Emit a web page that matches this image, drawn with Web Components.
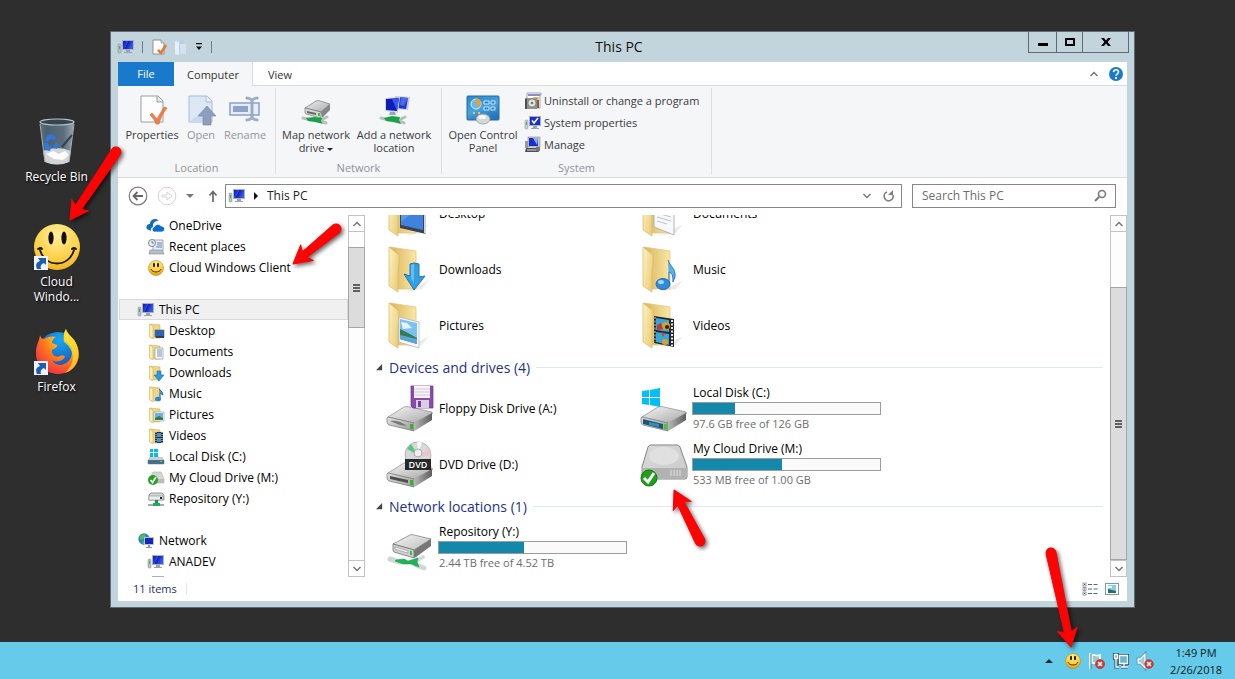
<!DOCTYPE html>
<html lang="en">
<head>
<meta charset="utf-8">
<title>This PC</title>
<style>
  html, body { height: 100%; margin: 0; }
  body { background: #2e2e2e; overflow: hidden; font-family: "Open Sans", "Noto Sans", sans-serif; font-size: 12px; line-height: 16px; color: #111; }
</style>
</head>
<body>
<desk-top></desk-top>
<script>
const ICONS = {
  pc: [16, `<linearGradient id="s" x2="1" y2=".4"><stop offset="0" stop-color="#0c16a8"/><stop offset=".45" stop-color="#2a48e0"/><stop offset=".5" stop-color="#1120b4"/><stop offset="1" stop-color="#3c5ae8"/></linearGradient>
    <rect x="4" y="1" width="12" height="10" fill="#a9b2c4"/><rect x="5" y="2" width="10" height="8" fill="url(#s)"/>
    <path d="M8 11h4v2h2v1H6v-1h2z" fill="#9aa3b0"/><rect x="0" y="5" width="3" height="9" rx="1" fill="#b9bfc6" stroke="#878f98" stroke-width=".5"/><rect x="1" y="7" width="1" height="3" fill="#35c32c"/>`],
  doccheck: [16, `<path d="M2 1h8l3 3v11H2z" fill="#fff" stroke="#8b8f94"/><path d="M10 1v3h3" fill="#ddd" stroke="#8b8f94" stroke-width=".7"/><path d="M7 11l3 3 5-8" fill="none" stroke="#e8743b" stroke-width="2.6"/>`],
  newfolder: [16, `<path d="M3 2l8-1v13H3z" fill="#b9cfe6"/><path d="M2 2l4 1v13l-4-1z" fill="#e6effa"/><path d="M7 5h6v10H7z" fill="#d3e1f1"/>`],
  props: [32, `<path d="M5 3h17l5 5v21H5z" fill="#fdfdfe" stroke="#9a9da3"/><path d="M21 3v6h6" fill="#e6e7ea" stroke="#9a9da3"/><path d="M14 22l2-2 5 6 7-12 3 1c-4 5-6 9-8 16h-3c-1-3-3-6-6-9z" fill="#ef8048" stroke="#d7632c" stroke-width=".6"/>`],
  open: [32, `<path d="M4 3h18l5 5v21H4z" fill="#dde7f6" stroke="#a4bce0"/><path d="M21 3v6h6" fill="#eef3fb" stroke="#a4bce0"/><path d="M4 29h14V18z" fill="#cbd9ef"/><path d="M22 13l9 10h-5v9h-8v-9h-5z" fill="#8d9dbd" stroke="#76879f" stroke-width=".6"/>`],
  rename: [32, `<rect x="1" y="10" width="29" height="12" fill="#e6edf8" stroke="#8fa6cb" stroke-width="1.6"/><rect x="4" y="13" width="15" height="6" fill="#8fa3c8"/><path d="M17 4c3 0 5 1 6 2 1-1 3-2 6-2v2c-3 0-5 1-5 3v14c0 2 2 3 5 3v2c-3 0-5-1-6-2-1 1-3 2-6 2v-2c3 0 5-1 5-3V9c0-2-2-3-5-3z" fill="#a3b3cf" stroke="#7f92b4" stroke-width=".6"/>`],
  mapdrive: [32, `<linearGradient id="t" x2="1" y2="1"><stop stop-color="#f2f2f2"/><stop offset="1" stop-color="#a9a9a9"/></linearGradient><path d="M5 15L16 8q2-1 4 0l10 3-9 8z" fill="url(#t)" stroke="#777" stroke-width=".7"/><path d="M5 15l16 4v6L6 21q-1 0-1-2z" fill="#d8d8d8" stroke="#666" stroke-width=".6"/><path d="M21 19l9-8v6l-8 8z" fill="#858585"/><path d="M7 18l9 2v2L7 20z" fill="#666"/><rect x="18" y="20" width="2" height="3" fill="#37c837"/><path d="M3 25l8 2M21 28l5 2M21 27l6-3" stroke="#b5c1bc" stroke-width="3" stroke-linecap="round"/><path d="M6 25l8-1 8 1-1 3 2 3-8-2-7-1z" fill="#18a34a"/>`],
  addnet: [32, `<path d="M17 3l15 1-2 13-12-1z" fill="#c5cad6"/><path d="M18 4l12 1-2 11-9-1z" fill="#1d35d0"/><path d="M23 4l7 1-4 8-4-1z" fill="#4c6af0"/><path d="M7 5l15-1-2 16-13-2z" fill="#d2d6de"/><path d="M8 6l13-1-2 13-11-1z" fill="#0c1cb8"/><path d="M14 6l7-1-2 13z" fill="#3958e8"/><path d="M12 19h5l1 3h-7z" fill="#9aa"/><path d="M3 25l8 2M21 28l5 2M21 27l6-3" stroke="#b5c1bc" stroke-width="3" stroke-linecap="round"/><path d="M6 25l8-2 8 1-1 3 2 4-8-2-7-1z" fill="#18a34a"/>`],
  panel: [32, `<linearGradient id="g" y2="1" x2=".5"><stop stop-color="#2b86c8"/><stop offset=".6" stop-color="#4aa2dc"/><stop offset="1" stop-color="#2777bb"/></linearGradient><rect x="0" y="3" width="32" height="24" rx="1" fill="url(#g)" stroke="#1e6aa8"/><circle cx="9" cy="11" r="5" fill="#6bb9ea" stroke="#d8efff"/><path d="M9 11V5a6 6 0 0 1 4 9z" fill="#f49b21"/><path d="M17 8h5v3h-5zM24 8h4v3h-4zM17 14h5v3h-5zM24 14h4v3h-4z" fill="#2a7ec4" stroke="#d8efff" stroke-width=".9"/><path d="M6 19h2v2H6z" fill="#f8c040"/><path d="M11 19h2v2h-2z" fill="#f8c040"/><ellipse cx="16" cy="26" rx="7" ry="5" fill="#d5d8da" stroke="#8b9196" stroke-width=".7"/><ellipse cx="15" cy="24" rx="4" ry="2" fill="#f5f6f7"/>`],
  uninstall: [16, `<path d="M2 0h14v2h-1v13H1V5h1z" fill="#fff" stroke="#7d81a4" stroke-width=".7"/><rect x="3" y="1" width="12" height="2" fill="#8d8fc0"/><path d="M8 4h6l-1 6z" fill="#edb84a"/><rect x="0" y="5" width="12" height="11" fill="#8f9490"/><circle cx="7" cy="10" r="4" fill="#dfe5df" stroke="#666" stroke-width=".6"/><circle cx="7" cy="10" r="1.300" fill="#777"/><path d="M1 6v10" stroke="#111"/><path d="M12 7h2v8h-2z" fill="#8a5a3a"/>`],
  sysprops: [16, `<rect x="4" y="1" width="12" height="10" fill="#a9aebb"/><rect x="5" y="2" width="10" height="8" fill="#1b2ed0"/><path d="M7 5.500l2 2.500 4-5" fill="none" stroke="#fff" stroke-width="1.600"/><path d="M8 11h4v2h2v1H6v-1h2z" fill="#9aa3b0"/><rect x="0" y="5" width="3" height="9" rx="1" fill="#c9cdd2" stroke="#878f98" stroke-width=".5"/><rect x="1" y="7" width="1" height="3" fill="#35c32c"/>`],
  manage: [16, `<rect x="3" y="0" width="12" height="10" fill="#c5c9cf" stroke="#777" stroke-width=".5"/><rect x="4" y="1" width="9" height="8" fill="#1b2ed0"/><path d="M8 1h5l-1 7z" fill="#8fb2f4"/><rect x="0" y="4" width="3" height="7" fill="#999"/><path d="M1 11h11l2 4H0z" fill="#4b4f55"/><path d="M2 13h10" stroke="#ddd"/><rect x="11" y="10" width="4" height="4" fill="#777"/>`],
  onedrive: [16, `<path d="M1 12a3 3 0 0 1 1-6 5 5 0 0 1 9-3 5 5 0 0 0-6 6 3 3 0 0 0-2 4z" fill="#0f6cbd"/><path d="M6 14a2.600 2.600 0 0 1 0-5 4 4 0 0 1 7-1 3 3 0 0 1 1 6z" fill="#0a6fcc" stroke="#fff" stroke-width=".7"/>`],
  recent: [16, `<path d="M5 1h10v11H5z" fill="#e9edf2" stroke="#8d98a5" stroke-width=".8"/><path d="M9 4h5M9 6h5M8 8h6" stroke="#5c88b8"/><path d="M2 11h12l2 4H1z" fill="#b8bfc7" stroke="#818a94" stroke-width=".6"/><circle cx="4" cy="4" r="3.500" fill="#eef1f4" stroke="#7a8694"/><path d="M4 2v2h2" stroke="#555" fill="none" stroke-width=".8"/>`],
  smile: [48, `<radialGradient id="g" cy=".25" r=".85"><stop stop-color="#ffef9c"/><stop offset=".6" stop-color="#fdd045"/><stop offset="1" stop-color="#eda81a"/></radialGradient><circle cx="24" cy="24" r="23" fill="url(#g)"/><ellipse cx="18" cy="15" rx="2.600" ry="6.500" fill="#141005"/><ellipse cx="31" cy="15" rx="2.600" ry="6.500" fill="#141005"/><path d="M5 26q3-2 4 0M39 26q2-2 4 0M7 27c5 18 29 18 34 0" fill="none" stroke="#1a1306" stroke-width="1.800" stroke-linecap="round"/>`],
  minismile: [16, `<radialGradient id="g" cy=".2" r=".9"><stop stop-color="#fff090"/><stop offset=".6" stop-color="#fbc92f"/><stop offset="1" stop-color="#d18d10"/></radialGradient><circle cx="8" cy="8" r="7.500" fill="url(#g)" stroke="#b58a26" stroke-width=".6"/><ellipse cx="6" cy="5" rx="1" ry="2.200" fill="#1b1302"/><ellipse cx="10" cy="5" rx="1" ry="2.200" fill="#1b1302"/><path d="M3 9c1 4 9 4 10 0" fill="none" stroke="#4a3508" stroke-width="1"/>`],
  folder: [16, `<path d="M2 1l10 1v13H3z" fill="#f0d684" stroke="#c9a54a" stroke-width=".5"/><path d="M1.500 1L5 3v12.500L1.500 14z" fill="#fbeeb5" stroke="#d0ae58" stroke-width=".6"/>`],
  disk: [16, `<path d="M2 8h12l2 3v4H0v-4z" fill="#9aa1a7"/><path d="M0 11h16v4H0z" fill="#3f6f8a" stroke="#777" stroke-width=".5"/><path d="M2 8h12l2 3H0z" fill="#c8cdd0"/><rect x="12" y="12" width="2" height="1" fill="#5fe04f"/><path d="M2 0h3v3H2zM6 0h4v3H6zM2 4h3v4H2zM6 4h4v4H6z" fill="#00bcf2"/>`],
  cloudsm: [16, `<path d="M5 2h8l3 7v4H2V9z" fill="#d6d6d6" stroke="#aaa" stroke-width=".6"/><path d="M2 9h14v4H2z" fill="#bcbcbc"/><circle cx="5" cy="10" r="5" fill="#23a31f"/><path d="M2.500 10l2 2.500L8 7" fill="none" stroke="#fff" stroke-width="1.700"/>`],
  netdrive: [16, `<path d="M3 2h11l2 2v5H1V4z" fill="#d5d8da" stroke="#777" stroke-width=".7"/><path d="M1 5h14v4H1z" fill="#eee" stroke="#777" stroke-width=".5"/><rect x="12" y="6" width="2" height="2" fill="#222"/><path d="M7 9h3v3H7z" fill="#0c9a55"/><path d="M5 12h7v3H5z" fill="#16ae67"/><path d="M0 14h5M12 14h4" stroke="#aaa" stroke-width="2"/>`],
  network: [16, `<circle cx="6" cy="6" r="5.700" fill="#2a7fd0"/><path d="M2 3q2-2 5-2l1 3-3 2-3 1zM4 8l3 1v3H5z" fill="#4fc04a"/><rect x="6" y="4" width="10" height="8" fill="#b9c3d4"/><rect x="7" y="5" width="8" height="6" fill="#1428b8"/><path d="M10 12h2v2h2v1H8v-1h2z" fill="#8f98a8"/>`],
  recycle: [48, `<linearGradient id="g" x2="1"><stop stop-color="#64737f"/><stop offset=".2" stop-color="#4b5f70"/><stop offset=".7" stop-color="#5c6e7c"/><stop offset="1" stop-color="#9ba6ae"/></linearGradient><path d="M7 4h34l-5 40q-12 5-24 0z" fill="url(#g)"/><path d="M10 33q14-6 28 0l-2 11q-12 5-24 0z" fill="#d2d5d7"/><path d="M13 36l7-3 6 3 6-3 4 4-6 5-9-1z" fill="#fff"/><ellipse cx="24" cy="4" rx="17" ry="3" fill="#36444f" stroke="#b9c2c8" stroke-width="1.200"/><path d="M14 17l5-1 4 3-2 3-4-1-2 3-3-1zM11 24l4 1 1 3 3-1-2 6-5-1zM20 30l1-3 3-3 2 4-2 3z" fill="#3177d8"/><path d="M7 6l5 38M41 6l-5 38" stroke="#a4afb7"/><path d="M29 29l10-12" stroke="#33424e" stroke-width="2"/>`],
  firefox: [48, `<radialGradient id="f" cx=".75" cy=".1" r="1"><stop stop-color="#fff03d"/><stop offset=".3" stop-color="#ffc21f"/><stop offset=".6" stop-color="#ff7a19"/><stop offset="1" stop-color="#f0294c"/></radialGradient><radialGradient id="b" cx=".55" cy=".2" r=".9"><stop stop-color="#16a8f2"/><stop offset="1" stop-color="#1b3aa6"/></radialGradient><circle cx="25" cy="24" r="20" fill="url(#b)"/><path d="M7 7c1 3 2 4 4 4 5-3 10-3 12-2-3 1-4 4-4 6l5 2c1 2-3 4-5 5-1 5 4 8 8 6 3-1 5 0 5 1-4 6-11 5-13 3 5 9 19 5 20-7 1-6-3-9-7-12-2-4-1-9 1-12 1 4 4 6 8 11 10 14 4 33-15 34C13 46 2 37 3 24c0-7 3-10 4-17z" fill="url(#f)"/><path d="M33 1c1 4 4 6 8 11 9 13 4 29-9 33 10-9 11-22-1-31-1-4 0-10 2-13z" fill="#ffdc30" opacity=".75"/>`],
  shortcut: [16, `<path d="M1 1h14v14H1z" fill="#eff3f8"/><path d="M4 14c-2-5 0-7 3-8L5 3h8v7l-2-2c-3 1-4 3-3 6z" fill="#1b5dae"/>`],
  flag: [16, `<path d="M1 0v16M3 2c3-1 4 2 8 0v8c-4 2-5-1-8 0z" stroke="#fff" stroke-width="1.600" fill="#9cc6d4"/><path d="M2 1v15" stroke="#3e5664" stroke-width=".8"/><circle cx="11" cy="11" r="4.500" fill="#d83a35" stroke="#a61d1a" stroke-width=".6"/><path d="M9 9l4 4M13 9l-4 4" stroke="#fff" stroke-width="1.500"/>`],
  nettray: [16, `<g fill="none" stroke="#33596b" stroke-width="3.200"><path d="M6.500 2.500h8v8h-8z"/><path d="M8 14h7M11 11v3M1.500 1.500h3v4h-3zM3 6v8h3"/></g><g fill="#6fb6d2" stroke="#fff" stroke-width="1.300"><path d="M6.500 2.500h8v8h-8z"/><path d="M8 14h7M11 11v3M1.500 1.500h3v4h-3z"/><path d="M3 6v8h3" fill="none"/></g>`],
  sound: [16, `<path d="M1 6h2l5-5v14l-5-5H1z" fill="#9ccbdc" stroke="#4a6d7d" stroke-width="2.400"/><path d="M1 6h2l5-5v14l-5-5H1z" fill="#9ccbdc" stroke="#fff" stroke-width="1.300"/><circle cx="12" cy="11" r="4.300" fill="#d83a35" stroke="#a61d1a" stroke-width=".6"/><path d="M10 9l4 4M14 9l-4 4" stroke="#fff" stroke-width="1.500"/>`],
  back: [20, `<circle cx="10" cy="10" r="8.800" fill="#fff" stroke="#7b7b7b" stroke-width="1.200"/><path d="M15 10H6M9.500 6L5.500 10l4 4" fill="none" stroke="#666" stroke-width="1.800"/>`],
  forward: [20, `<circle cx="10" cy="10" r="8.800" fill="#fff" stroke="#d4d4d4"/><path d="M5 9h5V6l5 4-5 4v-3H5z" fill="none" stroke="#d4d4d4"/>`],
  up: [16, `<path d="M8 14V4M4.500 7.500l3.500-4 3.500 4" fill="none" stroke="#6a6a6a" stroke-width="1.700"/>`],
  down: [8, `<path d="M0 2h8L4 6z" fill="#777"/>`],
  tri: [8, `<path d="M2 0l4 4-4 4z" fill="#111"/>`],
  refresh: [16, `<path d="M6 4a4.500 4.500 0 1 0 6 3" fill="none" stroke="#808080" stroke-width="1.700"/><path d="M12 2v5H7z" fill="#808080"/>`],
  mag: [16, `<circle cx="10" cy="6" r="3.500" fill="none" stroke="#777" stroke-width="1.600"/><path d="M7 9l-4 4" stroke="#777" stroke-width="2"/>`],
  chevup: [10, `<path d="M1.500 7L5 3.500 8.500 7" fill="none" stroke="#777" stroke-width="1.500"/>`],
  chevdown: [10, `<path d="M1.500 3L5 6.500 8.500 3" fill="none" stroke="#777" stroke-width="1.500"/>`],
  qat: [8, `<path d="M1 0h6v1.200H1zM1 3.500h6L4 7z" fill="#111"/>`],
  traytri: [8, `<path d="M0 6h8L4 2z" fill="#1c2a30"/>`],
  corner: [8, `<path d="M7 0v7H0z" fill="#444"/>`],
  help: [16, `<circle cx="8" cy="8" r="7" fill="#1979ca"/><path d="M5.500 6.200q.3-2.400 2.600-2.400T10.500 6q0 1-1.200 1.800T8 9.800" fill="none" stroke="#fff" stroke-width="1.600"/><rect x="7" y="11" width="2" height="2" fill="#fff"/>`],
  min: [12, `<rect x="1" y="7" width="10" height="3" fill="#000"/>`],
  max: [12, `<rect x="2" y="3" width="8" height="6" fill="none" stroke="#000" stroke-width="2"/>`],
  close: [12, `<path d="M1 2h3l2 2.600L8 2h3L7.600 6 11 10H8L6 7.400 4 10H1l3.400-4z" fill="#000"/>`],
  details: [16, `<g fill="none" stroke="#7d8693" stroke-width=".8"><rect x="1" y="2" width="3" height="3"/><rect x="1" y="6.500" width="3" height="3"/><rect x="1" y="11" width="3" height="3"/></g><path d="M2 3h1v1H2zM2 12h1v1H2z" fill="#35a"/><path d="M2 7.500h1v1H2z" fill="#c33"/><path d="M6 3.500h4M11.500 3.500h4M6 8h4M11.500 8h4M6 12.500h4M11.500 12.500h4" stroke="#5a6474"/>`],
  tiles: [16, `<rect x="1.500" y="2.500" width="13" height="11" fill="#fff" stroke="#6b9bbd"/><rect x="4" y="4" width="8" height="8" fill="#8fc8ee"/><path d="M4 8l4 1 4 1v2H4z" fill="#2d6f58"/><path d="M4 5h4v2H4z" fill="#dff"/>`]
};
/* Small overlays that turn the plain nav folder into each library folder. */
const SMALL = {
  desktop: `<path d="M7 7h9v7H7z" fill="#2a63b8" stroke="#5c6a78" stroke-width=".7"/><path d="M8 13h8v2H8z" fill="#35404d"/>`,
  documents: `<path d="M7 4h8v11H7z" fill="#fff" stroke="#8b97a6" stroke-width=".7"/><path d="M9 6h5M9 8h5M9 10h5M9 12h5" stroke="#5880a8" stroke-width=".9"/>`,
  downloads: `<path d="M9 6h4v4h3l-5 6-5-6h3z" fill="#2f97dd" stroke="#1b6ba8" stroke-width=".6"/>`,
  music: `<path d="M11 3q4 3 4 6l-3-2v6" fill="#4aa0e8" stroke="#1e6fc0"/><ellipse cx="10" cy="13" rx="3" ry="2.200" fill="#2a86d8"/>`,
  pictures: `<path d="M6 5h10v9H6z" fill="#fff" stroke="#9aa4ae" stroke-width=".7"/><path d="M7 6h8v7H7z" fill="#6db4e6"/><path d="M7 11l4-2 4 2v2H7z" fill="#3c7a4e"/>`,
  videos: `<path d="M7 4h8v11H7z" fill="#2b2f36"/><path d="M9 5h4v4H9zM9 10h4v4H9z" fill="#4a8fd0"/><path d="M8 4v11M14 4v11" stroke="#ddd" stroke-dasharray="1 1"/>`
};
const BIGFOLDER = `<linearGradient id="bk" x1="0" x2="1"><stop stop-color="#d9b45a"/><stop offset="1" stop-color="#f9e8a6"/></linearGradient><linearGradient id="fl" x2="1" y2=".6"><stop stop-color="#fdf3c0"/><stop offset="1" stop-color="#eccf7c"/></linearGradient>
  <path d="M28 42l15-8-7 9-18 3z" fill="#000" opacity=".08"/><path d="M4 1l26 4v38H12z" fill="url(#bk)" stroke="#dcc27a" stroke-width=".7"/><path d="M3 1l10 8v12l-1 3v22L3 40z" fill="url(#fl)" stroke="#d5b76a" stroke-width=".7"/>`;
const BIG = {
  desktop: `<path d="M14 8l26 5v31l-26-6z" fill="#39434f"/><path d="M15 10l22 4v26l-22-5z" fill="#3f82e0"/><path d="M15 10l22 4-22 18z" fill="#6ba6f2" opacity=".6"/><path d="M38 13l2 1v30l-2-1z" fill="#cfd5db"/>`,
  documents: `<path d="M14 10h14l6 4v31l-20-8z" fill="#f6f8fb" stroke="#9aa3ad" stroke-width=".8"/><path d="M17 19l14 3M17 23l14 4M17 27l14 4M17 31l10 3" stroke="#b9c2cc"/><path d="M22 16l7 2v4l-7-2z" fill="#2e8397"/>`,
  downloads: `<path d="M24 18q4-2 9 0v13l6-1-11 14-10-16 6 2z" fill="#34a0e2" stroke="#1d78b8"/><path d="M25 19q2-1 3-1v20l-3-6z" fill="#8bd0f5" opacity=".6"/>`,
  music: `<path d="M28 14c2 7 8 8 7 17l-2 5c0-7-1-9-4-10v13" fill="#58b0ef" stroke="#2a7cc6"/><ellipse cx="23" cy="38" rx="7" ry="5.500" fill="#2f8bdc" stroke="#1f6bb5"/><ellipse cx="21" cy="36" rx="3" ry="2" fill="#9fd6fa"/>`,
  pictures: `<path d="M13 15l20 5v26l-20-6z" fill="#f8f9fa" stroke="#b5babf" stroke-width=".8"/><path d="M14 17l17 4v21l-17-5z" fill="#7cc2f0"/><path d="M15 20l6 1 5 5-9 1z" fill="#fff" opacity=".8"/><path d="M14 27l8 4 9 5v6l-17-5z" fill="#357a52"/><path d="M14 33l17 4v5l-17-5z" fill="#5ba7d8"/>`,
  videos: `<path d="M14 14l20 3v28l-20-4z" fill="#23272c"/><path d="M16 16l13 2v12l-13-2zM16 30l13 2v11l-13-3z" fill="#37a6dc"/><circle cx="26" cy="24" r="4" fill="#d9a02a"/><circle cx="27" cy="25" r="2" fill="#222"/><path d="M17 23l4-2 2 6-6 1z" fill="#c8342e"/><path d="M21 30l4 1-2 4z" fill="#d43b2e"/><circle cx="25" cy="40" r="3" fill="#d9a02a"/><path d="M32 18v26" stroke="#e8e8e8" stroke-width="2" stroke-dasharray="2 1.500"/><path d="M15 15v25" stroke="#ccc" stroke-dasharray="2 1.500"/>`
};
const DRIVE = `<linearGradient id="t" x2="1" y2="1"><stop stop-color="#f6f6f6"/><stop offset="1" stop-color="#a6a6a6"/></linearGradient><linearGradient id="d" x2="1"><stop stop-color="#b8b8b8"/><stop offset="1" stop-color="#5e5e5e"/></linearGradient><linearGradient id="e" y2="1"><stop stop-color="#e2e2e2"/><stop offset="1" stop-color="#9a9a9a"/></linearGradient>
  <path d="M2 32L18 22q3-1 6 0l22 5q1 1 0 2L28 38z" fill="url(#t)" stroke="#8d8d8d" stroke-width=".7"/><path d="M2 32l26 6v8L3 40q-2-1-2-3v-4z" fill="url(#e)" stroke="#777" stroke-width=".7"/><path d="M28 38l18-10v7L30 45l-2 1z" fill="url(#d)"/>`;
const SLOT = `<path d="M4 35l18 4v3L4 38z" fill="#4c4f52"/><rect x="24" y="39" width="3" height="5" fill="#2fb32b"/>`;
const DRIVES = {
  floppy: DRIVE + `<path d="M4 36q9-1 17 5l-7-1z" fill="#777"/><rect x="24" y="39" width="3" height="5" fill="#2fb32b"/><path d="M25 1h22v22H27l-2-2z" fill="#8a4cab" stroke="#6c3590" stroke-width=".7"/><path d="M28 1h16v12H28z" fill="#f7f5fa"/><path d="M28 4h16M28 7h16M28 10h16" stroke="#ccc4d6"/><path d="M30 15h13v8H30z" fill="#d9cfe3"/><path d="M32 16h3v6h-3z" fill="#7a3d9c"/>`,
  dvd: DRIVE + SLOT + `<circle cx="32" cy="14" r="13" fill="#d6d8da" stroke="#a2a6a9" stroke-width=".8"/><path d="M32 14L21 8l4-5z" fill="#58c878"/><path d="M32 14l-1-13h5z" fill="#f7f7f7"/><path d="M32 14l12-6 1 7z" fill="#efc2c8"/><circle cx="32" cy="12" r="4" fill="#eceeef" stroke="#aaa"/><path d="M19 18h26v11H19z" fill="#26282a"/><text x="32" y="27" text-anchor="middle" font-family="Open Sans" font-size="9" font-weight="600" fill="#fff">DVD</text>`,
  local: DRIVE + `<path d="M3 34l20 5v5L3 39z" fill="#1d5674"/><path d="M9 37l10 2v3l-10-2z" fill="#2f90b8"/><rect x="24" y="39" width="3" height="5" fill="#39d026"/><path d="M2 6l7-1v7H2zM10 5l10-2v9H10zM2 13h7v7l-7-1zM10 13h10v9l-10-2z" fill="#00c0f7"/>`,
  cloud: `<linearGradient id="t" y2="1"><stop stop-color="#dadada"/><stop offset="1" stop-color="#cacaca"/></linearGradient><path d="M11 4h26q2 0 3 2l7 20v10q0 2-2 2H4q-2 0-2-2V26L8 6q1-2 3-2z" fill="url(#t)" stroke="#858585"/><path d="M2 27h45v9q0 2-2 2H4q-2 0-2-2z" fill="#b2b2b2"/><ellipse cx="24" cy="15" rx="15" ry="9" fill="#e0e0e0"/><path d="M31 29v6M34 29v6M37 29v6M40 29v6" stroke="#e2e2e2"/><circle cx="9" cy="37" r="8" fill="#1fa01b" stroke="#137a12"/><path d="M4 37l4 4 6-9" fill="none" stroke="#fff" stroke-width="3"/>`,
  net: `<linearGradient id="t" x2="1" y2="1"><stop stop-color="#f6f6f6"/><stop offset="1" stop-color="#bcbcbc"/></linearGradient><path d="M7 20l17-9q2-1 4 0l17 4-17 11z" fill="url(#t)" stroke="#777" stroke-width=".7"/><path d="M7 20l21 6v8L8 28q-1-1-1-3z" fill="#d0d0d0" stroke="#666" stroke-width=".7"/><path d="M28 26l17-11v7L30 33l-2 1z" fill="#777"/><path d="M9 23l13 4v2L9 25z" fill="#fff" stroke="#777" stroke-width=".5"/><rect x="24" y="27" width="2" height="4" fill="#36c22e"/><path d="M4 35l10 3M30 41l8 3" stroke="#cfd8d6" stroke-width="5" stroke-linecap="round"/><path d="M30 37l7-4" stroke="#d5dddb" stroke-width="4" stroke-linecap="round"/><path d="M10 36l8-1 4 2 10-3-1 4 2 5-8-3-8 0-8-3z" fill="#1db457" stroke="#14913f" stroke-width=".5"/>`
};
for (const k in SMALL) ICONS['s-' + k] = [16, ICONS.folder[1] + SMALL[k]];
for (const k in BIG) ICONS['b-' + k] = [48, BIGFOLDER + BIG[k]];
for (const k in DRIVES) ICONS['d-' + k] = [48, DRIVES[k]];

const icon = (name, size) => `<win-icon name="${name}" style="--size:${size || ICONS[name][0]}px"></win-icon>`;

/* Base class: renders a template string into an open shadow root. */
class Part extends HTMLElement {
  connectedCallback() {
    if (this.shadowRoot) return;
    const t = document.createElement('template');
    t.innerHTML = this.view();
    this.attachShadow({ mode: 'open' }).append(t.content.cloneNode(true));
  }
  at(name) { return this.getAttribute(name) || ''; }
}
const define = (tag, view) => customElements.define(tag, class extends Part { view() { return view(this); } });
const RESET = `button, a { font: inherit; color: inherit; background: none; border: 0; padding: 0; margin: 0; text-decoration: none; cursor: default; }`;

define('win-icon', el => {
  const [box, body] = ICONS[el.at('name')];
  return `<style>:host { display: block; flex: none; width: var(--size); height: var(--size); } svg { display: block; width: 100%; height: 100%; overflow: visible; }</style>
  <svg viewBox="0 0 ${box} ${box}" aria-hidden="true">${body}</svg>`;
});

define('desktop-shortcut', el => `<style>${RESET}
  :host { display: block; height: 105px; }
  a { display: flex; flex-direction: column; align-items: center; gap: 3px; color: #fff; text-align: center; line-height: 15px; text-shadow: 1px 1px 2px #000; }
  .pic { position: relative; }
  .badge { position: absolute; left: 0; bottom: 0; }
  span { width: 64px; }
  </style><a href="#"><div class="pic">${icon(el.at('icon'), 48)}${el.hasAttribute('linked') ? `<div class="badge">${icon('shortcut', 16)}</div>` : ''}</div><span><slot></slot></span></a>`);

define('title-bar', () => `<style>${RESET}
  :host { display: grid; grid-template-columns: 1fr auto 1fr; height: 30px; }
  .quick { display: flex; align-items: center; gap: 6px; }
  .quick i { width: 1px; height: 12px; margin: 0 2px; background: #6f7f88; }
  h1 { margin: 0; padding-right: 7px; font-size: 14px; font-weight: 400; line-height: 30px; }
  .caption { display: flex; justify-self: end; align-self: start; border: solid #5d6a72; border-width: 0 1px 1px; height: 20px; margin-right: -2px; }
  .caption button { display: flex; align-items: center; justify-content: center; width: 27px; }
  .caption button:nth-child(n+2) { border-left: 1px solid #5d6a72; }
  .caption button:nth-child(2) { width: 26px; }
  .caption button:last-child { width: 46px; }
  </style>
  <div class="quick">${icon('pc')}<i></i>${icon('doccheck')}${icon('newfolder', 16)}<button aria-label="Customize">${icon('qat', 8)}</button><i></i></div>
  <h1>This PC</h1>
  <div class="caption"><button aria-label="Minimize">${icon('min')}</button><button aria-label="Maximize">${icon('max')}</button><button aria-label="Close">${icon('close')}</button></div>`);

define('ribbon-tabs', () => `<style>${RESET}
  :host { display: flex; height: 23px; background: #fff; border-bottom: 1px solid #dadbdc; padding-right: 3px; align-items: stretch; color: #333; font-size: 11px; }
  a { display: block; line-height: 25px; text-align: center; }
  .file { width: 56px; background: #1979ca; color: #fff; line-height: 24px; height: 24px; }
  .on { width: 78px; height: 24px; background: #f5f6f7; border-right: 1px solid #dadbdc; }
  .view { width: 54px; }
  .end { margin-left: auto; display: flex; align-items: center; gap: 9px; }
  </style>
  <a class="file" href="#">File</a><a class="on" href="#">Computer</a><a class="view" href="#">View</a>
  <div class="end"><button aria-label="Collapse ribbon">${icon('chevup')}</button><button aria-label="Help">${icon('help')}</button></div>`);

define('ribbon-group', el => `<style>
  :host { display: flex; flex-direction: column; box-sizing: border-box; margin: 2px 0 3px; border-right: 1px solid #dfe0e2; }
  .items { flex: 1; display: flex; padding-top: 5px; }
  .label { text-align: center; color: #909399; font-size: 11px; line-height: 12px; }
  </style><div class="items"><slot></slot></div><div class="label">${el.at('label')}</div>`);

define('ribbon-button', el => `<style>${RESET}
  :host { display: block; color: #3b3b3b; font-size: 11px; }
  :host([disabled]) { color: #929599; }
  button { display: flex; flex-direction: column; align-items: center; gap: 3px; width: 100%; line-height: 13px; white-space: nowrap; }
  </style><button${el.hasAttribute('disabled') ? ' disabled' : ''}>${icon(el.at('icon'), 32)}<span><slot></slot></span></button>`);

define('ribbon-link', el => `<style>${RESET}
  :host { display: block; color: #3b3b3b; font-size: 11px; }
  button { display: flex; align-items: center; gap: 3px; height: 22px; white-space: nowrap; }
  </style><button>${icon(el.at('icon'), 16)}<slot></slot></button>`);

define('ribbon-bar', () => `<style>
  :host { display: flex; height: 91px; background: #f5f6f7; border-bottom: 1px solid #dadbdc; }
  .c { display: flex; flex-direction: column; padding-left: 4px; margin-top: -3px; }
  .sm { display: inline-block; vertical-align: middle; margin-left: 3px; width: 0; height: 0; border: 3px solid transparent; border-top-color: #222; border-bottom: 0; }
  .w44 { width: 44px; } .w54 { width: 54px; } .w80 { width: 80px; } .w76 { width: 76px; }
  </style>
  <ribbon-group label="Location" style="width:158px;padding-left:7px;padding-right:7px">
    <ribbon-button class="w54" icon="props">Properties</ribbon-button><ribbon-button class="w44" icon="open" disabled>Open</ribbon-button><ribbon-button class="w44" icon="rename" disabled>Rename</ribbon-button>
  </ribbon-group>
  <ribbon-group label="Network" style="width:166px">
    <ribbon-button class="w80" icon="mapdrive">Map network<br>drive<span class="sm"></span></ribbon-button><ribbon-button class="w76" icon="addnet">Add a network<br>location</ribbon-button>
  </ribbon-group>
  <ribbon-group label="System" style="width:270px;padding-left:3px;padding-right:3px">
    <ribbon-button class="w76" icon="panel">Open Control<br>Panel</ribbon-button>
    <div class="c"><ribbon-link icon="uninstall">Uninstall or change a program</ribbon-link><ribbon-link icon="sysprops">System properties</ribbon-link><ribbon-link icon="manage">Manage</ribbon-link></div>
  </ribbon-group>`);

define('address-row', () => `<style>${RESET}
  :host { display: flex; align-items: center; padding: 6px 11px 7px 10px; color: #222; }
  .nav { display: flex; align-items: center; width: 97px; gap: 9px; }
  .nav .up { margin-left: 2px; }
  .box { box-sizing: border-box; height: 24px; border: 1px solid #858789; display: flex; align-items: center; background: #fff; }
  .path { flex: 1; padding: 0 4px 0 3px; gap: 7px; }
  .path .end { margin-left: auto; display: flex; align-items: center; gap: 9px; }
  .search { width: 204px; margin-left: 10px; padding: 0 7px 0 9px; }
  input { flex: 1; min-width: 0; border: 0; padding: 0; outline: 0; font: inherit; background: none; }
  input::placeholder { color: #6d6d6d; opacity: 1; }
  </style>
  <div class="nav"><button aria-label="Back">${icon('back')}</button><button aria-label="Forward">${icon('forward')}</button><button class="dd" aria-label="Recent locations">${icon('down')}</button><button class="up" aria-label="Up">${icon('up')}</button></div>
  <nav class="box path" aria-label="Address">${icon('pc')}${icon('tri', 8)}<a href="#">This PC</a><span class="end"><button aria-label="Previous locations">${icon('chevdown')}</button><button aria-label="Refresh">${icon('refresh')}</button></span></nav>
  <div class="box search"><input type="search" placeholder="Search This PC" aria-label="Search This PC"><button aria-label="Search">${icon('mag')}</button></div>`);

define('scroll-bar', () => `<style>${RESET}
  :host { display: flex; flex-direction: column; flex: none; box-sizing: border-box; width: 17px; border: 1px solid #c3c3c3; background: #fdfdfd; }
  button { height: 16px; display: flex; align-items: center; justify-content: center; background: #fff; }
  .u { border-bottom: 1px solid #c3c3c3; } .d { border-top: 1px solid #c3c3c3; }
  .track { flex: 1; display: flex; flex-direction: column; padding: var(--before) 0 var(--after); }
  .thumb { flex: 1; margin: 0 -1px; border: 1px solid #a6a6a6; background: #dcdcdc; display: flex; align-items: center; justify-content: center; }
  .thumb i { width: 7px; height: 8px; background: repeating-linear-gradient(#606060 0 2px, #dcdcdc 2px 3px); }
  </style><button class="u" aria-label="Scroll up">${icon('chevup')}</button><div class="track"><div class="thumb"><i></i></div></div><button class="d" aria-label="Scroll down">${icon('chevdown')}</button>`);

define('tree-item', el => `<style>${RESET}
  :host { display: block; height: 21px; color: #000; }
  :host([gap]) { margin-top: 21px; }
  a { display: flex; align-items: center; gap: 5px; box-sizing: border-box; height: 21px; margin-left: 1px; padding-left: 29px; border: 0 solid #d9d9d9; }
  :host([top]) a { padding-left: 19px; }
  :host([selected]) a { border-width: 1px; padding-left: 18px; background: #f0f0f0; }
  </style><a href="#">${icon(el.at('icon'), 16)}<slot></slot></a>`);

define('tree-pane', () => `<style>
  :host { display: flex; flex: none; width: 247px; min-height: 0; }
  nav { flex: 1; overflow: hidden; height: 100%; }
  scroll-bar { --before: 15px; --after: 232px; }
  </style><nav>
  <tree-item icon="onedrive">OneDrive</tree-item><tree-item icon="recent">Recent places</tree-item><tree-item icon="minismile">Cloud Windows Client</tree-item>
  <tree-item gap top selected icon="pc">This PC</tree-item><tree-item icon="s-desktop">Desktop</tree-item><tree-item icon="s-documents">Documents</tree-item><tree-item icon="s-downloads">Downloads</tree-item><tree-item icon="s-music">Music</tree-item><tree-item icon="s-pictures">Pictures</tree-item><tree-item icon="s-videos">Videos</tree-item><tree-item icon="disk">Local Disk (C:)</tree-item><tree-item icon="cloudsm">My Cloud Drive (M:)</tree-item><tree-item icon="netdrive">Repository (Y:)</tree-item>
  <tree-item gap top icon="network">Network</tree-item><tree-item icon="pc">ANADEV</tree-item><tree-item icon="pc"></tree-item>
  </nav><scroll-bar></scroll-bar>`);

define('item-tile', el => `<style>${RESET}
  :host { display: block; width: 254px; height: 56px; color: #000; }
  a { display: flex; align-items: center; height: 56px; gap: 4px; }
  .t, .sub { padding-left: 1px; }
  .info { display: flex; flex-direction: column; gap: 1px; width: 190px; }
  progress { appearance: none; display: block; box-sizing: border-box; width: 189px; height: 13px; border: 1px solid #9c9c9c; background: #fafafa; }
  progress::-webkit-progress-bar { background: #fafafa; }
  progress::-webkit-progress-value { background: #1488aa; }
  .sub { color: #6d6d6d; font-size: 11px; padding-bottom: 2px; }
  </style><a href="#">${icon(el.at('icon'), 48)}<div class="info"><span class="t"><slot></slot></span>${el.at('used') ? `<progress max="100" value="${el.at('used')}" aria-label="Space used"></progress><span class="sub">${el.at('sub')}</span>` : ''}</div></a>`);

define('item-group', el => `<style>${RESET}
  :host { display: block; }
  h2 { display: flex; align-items: center; gap: 6px; height: 27px; margin: 0 7px 0 -10px; font-size: 14px; font-weight: 400; color: #1e3287; }
  h2::after { content: ""; flex: 1; height: 1px; background: #e0e8f2; }
  .items { display: flex; flex-wrap: wrap; }
  </style>${el.at('label') ? `<h2>${icon('corner', 7)}<span>${el.at('label')}</span></h2>` : ''}<div class="items"><slot></slot></div>`);

define('files-pane', () => `<style>
  :host { display: flex; flex: 1; min-width: 0; min-height: 0; }
  main { flex: 1; overflow: hidden; padding-left: 21px; }
  .scrolled { margin-top: -29px; }
  item-group { max-width: 726px; }
  scroll-bar { --before: 55px; --after: 0; }
  </style><main><div class="scrolled">
  <item-group><item-tile icon="b-desktop">Desktop</item-tile><item-tile icon="b-documents">Documents</item-tile><item-tile icon="b-downloads">Downloads</item-tile><item-tile icon="b-music">Music</item-tile><item-tile icon="b-pictures">Pictures</item-tile><item-tile icon="b-videos">Videos</item-tile></item-group>
  <item-group label="Devices and drives (4)"><item-tile icon="d-floppy">Floppy Disk Drive (A:)</item-tile><item-tile icon="d-local" used="22.5" sub="97.6 GB free of 126 GB">Local Disk (C:)</item-tile><item-tile icon="d-dvd">DVD Drive (D:)</item-tile><item-tile icon="d-cloud" used="47.5" sub="533 MB free of 1.00 GB">My Cloud Drive (M:)</item-tile></item-group>
  <item-group label="Network locations (1)"><item-tile icon="d-net" used="45.5" sub="2.44 TB free of 4.52 TB">Repository (Y:)</item-tile></item-group>
  </div></main><scroll-bar></scroll-bar>`);

define('status-bar', () => `<style>${RESET}
  :host { display: flex; align-items: center; height: 24px; padding: 0 7px 0 15px; color: #1e2f66; font-size: 11px; }
  span { padding-right: 9px; border-right: 1px solid #e6e6e6; line-height: 12px; }
  div { margin-left: auto; display: flex; gap: 6px; }
  </style><span>11 items</span><div><button aria-label="Details view">${icon('details')}</button><button aria-label="Large icons view">${icon('tiles')}</button></div>`);

define('explorer-window', () => `<style>
  :host { display: flex; flex-direction: column; background: #c3d5dc; border: 1px solid #5f6a72; padding: 0 7px 6px; min-width: 0; }
  .client { flex: 1; display: flex; flex-direction: column; min-height: 0; background: #fff; }
  .panes { flex: 1; display: flex; min-height: 0; }
  </style><title-bar></title-bar><div class="client"><ribbon-tabs></ribbon-tabs><ribbon-bar></ribbon-bar><address-row></address-row><div class="panes"><tree-pane></tree-pane><files-pane></files-pane></div><status-bar></status-bar></div>`);

define('task-bar', () => `<style>${RESET}
  :host { display: flex; align-items: center; justify-content: flex-end; box-sizing: border-box; height: 37px; background: #66caea; color: #0d1b22; padding: 1px 12px 0 0; gap: 8px; }
  .clock { width: 54px; margin-left: 8px; text-align: center; font-size: 11px; line-height: 17px; white-space: nowrap; }
  .tri { margin-right: 4px; }
  </style><button class="tri" aria-label="Show hidden icons">${icon('traytri')}</button><button aria-label="Cloud Windows Client">${icon('minismile')}</button><button aria-label="Action Center">${icon('flag')}</button><button aria-label="Network">${icon('nettray')}</button><button aria-label="Volume">${icon('sound')}</button><div class="clock">1:49 PM<br>2/26/2018</div>`);

/* A red callout arrow; dx and dy run from the middle of its tail to its tip. */
define('pointer-arrow', el => {
  const dx = +el.at('dx'), dy = +el.at('dy'), len = Math.hypot(dx, dy), turn = Math.atan2(dy, dx) * 180 / Math.PI;
  return `<style>:host { position: absolute; width: 0; height: 0; pointer-events: none; } svg { display: block; width: 1px; height: 1px; overflow: visible; filter: drop-shadow(2px 2px 2px rgba(0,0,0,.6)); }</style>
  <svg aria-hidden="true"><path transform="rotate(${turn})" d="M0 -5A5 5 0 0 0 0 5L${len - 15} 3.500L${len - 18} 10L${len} 0L${len - 18} -10L${len - 15} -3.500Z" fill="#fb0404" stroke="#fb0404" stroke-linejoin="round"/></svg>`;
});

define('desk-top', () => `<style>
  :host { display: flex; flex-direction: column; height: 100%; position: relative; overflow: hidden; }
  .area { flex: 1; display: flex; min-height: 0; }
  .icons { flex: none; width: 107px; padding: 118px 0 0 3px; }
  explorer-window { flex: 1; margin: 31px 100px 34px 0; }
  </style><div class="area"><div class="icons"><desktop-shortcut icon="recycle"><span style="white-space:nowrap">Recycle Bin</span></desktop-shortcut><desktop-shortcut icon="smile" linked>Cloud Windo...</desktop-shortcut><desktop-shortcut icon="firefox" linked>Firefox</desktop-shortcut></div><explorer-window></explorer-window></div>
  <task-bar></task-bar>
  <pointer-arrow style="left:116px;top:152px" dx="-46" dy="68"></pointer-arrow>
  <pointer-arrow style="left:336px;top:229px" dx="-43" dy="35"></pointer-arrow>
  <pointer-arrow style="left:700px;top:541px" dx="-26" dy="-51"></pointer-arrow>
  <pointer-arrow style="right:184px;bottom:126px" dx="20" dy="94"></pointer-arrow>`);
</script>
</body>
</html>
